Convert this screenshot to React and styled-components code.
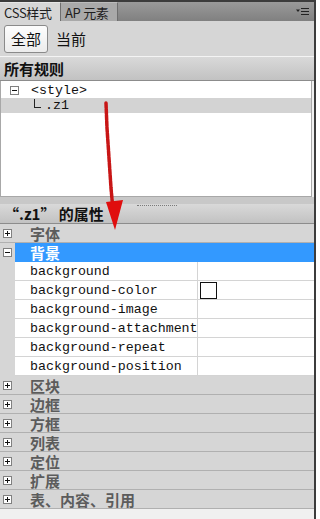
import React, { useState } from "react";
import styled, { createGlobalStyle } from "styled-components";

const GlobalStyle = createGlobalStyle`
  html, body {
    margin: 0;
    padding: 0;
    background: #ffffff;
    overflow: hidden;
  }
`;

const CJK = `"Noto Sans CJK SC", "Liberation Sans", sans-serif`;
const MONO = `"Liberation Mono", "Noto Sans CJK SC", monospace`;

const StyledPanel = styled.div`
  position: relative;
  width: 316px;
  height: 519px;
  border-top: 2px solid #3c3c3c;
  border-right: 2px solid #3c3c3c;
  box-sizing: border-box;
  background: #f0f0f0;
  display: flex;
  flex-direction: column;
  font-family: ${CJK};
`;

const StyledTabBar = styled.div`
  height: 19px;
  display: flex;
  align-items: stretch;
  background: linear-gradient(#9a9a9a, #808080);
`;

const StyledTab = styled.div`
  width: ${(p) => p.$w}px;
  box-sizing: border-box;
  display: flex;
  align-items: center;
  padding-left: 4px;
  font-size: 13px;
  color: #1e1e1e;
  background: ${(p) => (p.$active ? "#d6d6d6" : "#a9a9a9")};
  border-right: 1px solid #6e6e6e;
  border-top: 1px solid ${(p) => (p.$active ? "#e6e6e6" : "#bcbcbc")};
  letter-spacing: -0.3px;
`;

const StyledMenu = styled.div`
  margin-left: auto;
  width: 18px;
  display: flex;
  align-items: center;
`;

const StyledToolbar = styled.div`
  height: 36px;
  background: #d6d6d6;
  display: flex;
  align-items: center;
  padding-left: 4px;
  border-bottom: 1px solid #f4f4f4;
  box-sizing: border-box;
`;

const StyledButton = styled.button`
  height: 28px;
  padding: 0 6px;
  margin-right: 1px;
  font-family: ${CJK};
  font-size: 15px;
  color: #111;
  border-radius: 3px;
  border: 1px solid ${(p) => (p.$pressed ? "#8a8a8a" : "transparent")};
  background: ${(p) => (p.$pressed ? "linear-gradient(#fdfdfd, #ececec)" : "transparent")};
  cursor: pointer;
`;

const StyledSectionHead = styled.div`
  height: ${(p) => p.$h}px;
  box-sizing: border-box;
  display: flex;
  align-items: center;
  padding-left: 4px;
  font-size: 15px;
  font-weight: 700;
  color: #111;
  background: linear-gradient(#d9d9d9, #c2c2c2);
  border-bottom: 1px solid #8c8c8c;
  position: relative;
`;

const StyledGrip = styled.div`
  position: absolute;
  top: 1px;
  left: 137px;
  width: 40px;
  height: 1px;
  border-top: 1px dotted #7a7a7a;
`;

const StyledTree = styled.div`
  height: 116px;
  margin-right: 2px;
  background: #ffffff;
  border: 1px solid #a8a8a8;
  border-top: 0;
  box-sizing: border-box;
  padding-top: 2px;
`;

const StyledTreeRow = styled.div`
  height: 15px;
  display: flex;
  align-items: center;
  padding-left: ${(p) => p.$indent}px;
  background: ${(p) => (p.$selected ? "#d3d3d3" : "transparent")};
  font-family: ${MONO};
  font-size: 13.3px;
  color: #111;
  gap: 8px;
`;

const StyledElbow = styled.span`
  width: 6px;
  height: 8px;
  margin-top: -5px;
  border-left: 1px solid #222;
  border-bottom: 1px solid #222;
`;

const StyledSplitter = styled.div`
  height: 7px;
  background: #c8c8c8;
`;

const StyledRow = styled.div`
  height: 19px;
  display: flex;
  box-sizing: border-box;
`;

const StyledGutter = styled.div`
  width: 15px;
  flex: none;
  display: flex;
  align-items: center;
  justify-content: center;
  background: #d6d6d6;
  border-bottom: 1px solid ${(p) => (p.$line ? "#b0b0b0" : "#d6d6d6")};
`;

const StyledCategory = styled.div`
  flex: 1;
  display: flex;
  align-items: center;
  padding-left: 15px;
  font-size: 15px;
  font-weight: 700;
  color: ${(p) => (p.$open ? "#ffffff" : "#5c5c5c")};
  background: ${(p) => (p.$open ? "#3399ff" : "#d6d6d6")};
  border-bottom: 1px solid ${(p) => (p.$open ? "#3399ff" : "#b0b0b0")};
`;

const StyledName = styled.div`
  width: 183px;
  flex: none;
  box-sizing: border-box;
  display: flex;
  align-items: center;
  padding-left: 15px;
  background: #ffffff;
  font-family: ${MONO};
  font-size: 13.3px;
  color: #111;
  white-space: nowrap;
  border-right: 1px solid #d4d4d4;
  border-bottom: 1px solid #d4d4d4;
`;

const StyledValue = styled.div`
  flex: 1;
  display: flex;
  align-items: center;
  padding-left: 2px;
  background: #ffffff;
  border-bottom: 1px solid #d4d4d4;
`;

const StyledSwatch = styled.span`
  width: 15px;
  height: 15px;
  border: 1px solid #111;
  background: #ffffff;
`;

const StyledArrow = styled.svg`
  position: absolute;
  left: 96px;
  top: 96px;
  pointer-events: none;
`;

const Expander = ({ open }) => (
  <svg width="9" height="9" viewBox="0 0 9 9">
    <rect x="0.5" y="0.5" width="8" height="8" fill="#fff" stroke="#808080" />
    <line x1="2" y1="4.5" x2="7" y2="4.5" stroke="#111" />
    {!open && <line x1="4.5" y1="2" x2="4.5" y2="7" stroke="#111" />}
  </svg>
);

const categoriesBefore = ["字体"];
const categoriesAfter = ["区块", "边框", "方框", "列表", "定位", "扩展", "表、内容、引用"];
const props = [
  "background",
  "background-color",
  "background-image",
  "background-attachment",
  "background-repeat",
  "background-position",
];

const App = () => {
  const [scope, setScope] = useState("all");

  return (
    <>
      <GlobalStyle />
      <StyledPanel>
        <StyledTabBar>
          <StyledTab $w={61} $active>CSS样式</StyledTab>
          <StyledTab $w={57}>AP 元素</StyledTab>
          <StyledMenu>
            <svg width="14" height="9" viewBox="0 0 14 9">
              <path d="M0 2.5h4l-2 2.5z" fill="#222" />
              <path d="M5 1.5h8M5 4.5h8M5 7.5h8" stroke="#222" strokeWidth="1.2" />
            </svg>
          </StyledMenu>
        </StyledTabBar>

        <StyledToolbar>
          <StyledButton $pressed={scope === "all"} onClick={() => setScope("all")}>全部</StyledButton>
          <StyledButton $pressed={scope === "current"} onClick={() => setScope("current")}>当前</StyledButton>
        </StyledToolbar>

        <StyledSectionHead $h={24}>所有规则</StyledSectionHead>
        <StyledTree>
          <StyledTreeRow $indent={9}>
            <Expander open />
            <span style={{ marginLeft: 4 }}>&lt;style&gt;</span>
          </StyledTreeRow>
          <StyledTreeRow $indent={33} $selected>
            <StyledElbow />
            <span style={{ marginLeft: -4 }}>.z1</span>
          </StyledTreeRow>
        </StyledTree>
        <StyledSplitter />

        <StyledSectionHead $h={20}>
          <StyledGrip />
          “.z1” 的属性
        </StyledSectionHead>

        {categoriesBefore.map((c) => (
          <StyledRow key={c}>
            <StyledGutter $line><Expander /></StyledGutter>
            <StyledCategory>{c}</StyledCategory>
          </StyledRow>
        ))}
        <StyledRow>
          <StyledGutter><Expander open /></StyledGutter>
          <StyledCategory $open>背景</StyledCategory>
        </StyledRow>
        {props.map((p) => (
          <StyledRow key={p}>
            <StyledGutter />
            <StyledName>{p}</StyledName>
            <StyledValue>{p === "background-color" && <StyledSwatch />}</StyledValue>
          </StyledRow>
        ))}
        {categoriesAfter.map((c) => (
          <StyledRow key={c}>
            <StyledGutter $line><Expander /></StyledGutter>
            <StyledCategory>{c}</StyledCategory>
          </StyledRow>
        ))}

        <StyledArrow width="30" height="135" viewBox="0 0 30 135">
          <path
            d="M10 5 L11 30 L13 60 L15 90 L17 112"
            stroke="#c81616"
            strokeWidth="3.5"
            strokeDasharray="5 1"
            strokeLinecap="round"
            fill="none"
          />
          <path d="M10 104 L27 102 L19 132 Z" fill="#e00e0e" />
        </StyledArrow>
      </StyledPanel>
    </>
  );
};

export default App;
